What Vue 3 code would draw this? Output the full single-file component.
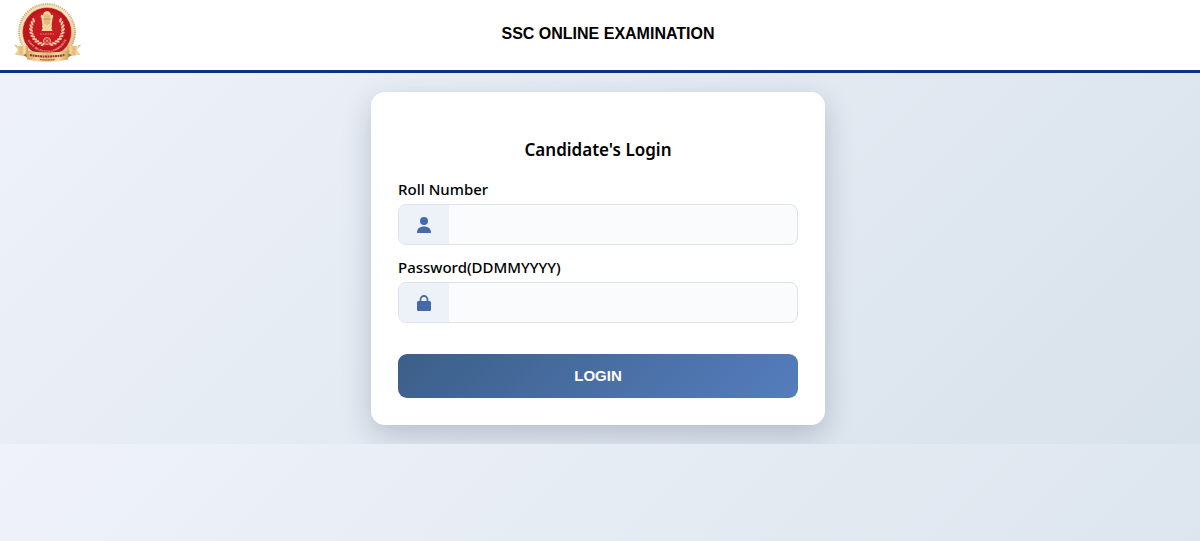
<script setup>
import { ref } from 'vue'

const rollNumber = ref('')
const password = ref('')

// Leaf positions along the two laurel branches of the emblem
const leaves = Array.from({ length: 10 }, (_, i) => {
  const angle = 105 + i * 12
  const a = (angle * Math.PI) / 180
  return { x: 33 + 16 * Math.cos(a), y: 28 + 16 * Math.sin(a), r: angle }
})
</script>

<template>
  <header class="topbar">
    <svg class="emblem" viewBox="0 0 68 62" role="img" aria-label="Staff Selection Commission">
      <defs>
        <linearGradient id="gold" x1="0" x2="1" y1="0" y2="1">
          <stop offset="0" stop-color="#e9d6a4" />
          <stop offset="0.5" stop-color="#f7eed2" />
          <stop offset="1" stop-color="#d6b070" />
        </linearGradient>
        <linearGradient id="ribbon" x1="0" x2="1">
          <stop offset="0" stop-color="#d3a45f" />
          <stop offset="0.25" stop-color="#f0d69a" />
          <stop offset="0.5" stop-color="#e2b878" />
          <stop offset="0.75" stop-color="#f3dca6" />
          <stop offset="1" stop-color="#cf9c56" />
        </linearGradient>
        <path id="ring" d="M11.500 30a21.500 21.500 0 0 0 43 0" />
      </defs>
      <circle cx="33" cy="31" r="28.500" fill="url(#gold)" />
      <circle cx="33" cy="31" r="28" fill="none" stroke="#c8ad72" stroke-width="2" stroke-dasharray="1 1.200" />
      <circle cx="33" cy="31" r="24.500" fill="#bd151c" stroke="#e8c58a" stroke-width="0.500" />
      <circle cx="33" cy="28" r="18.500" fill="#c61c22" />
      <g fill="#f0c9a6">
        <ellipse
          v-for="(l, i) in leaves"
          :key="'l' + i"
          :cx="l.x"
          :cy="l.y"
          rx="2.500"
          ry="1.100"
          :transform="`rotate(${l.r + 45} ${l.x} ${l.y})`"
        />
        <ellipse
          v-for="(l, i) in leaves"
          :key="'r' + i"
          :cx="66 - l.x"
          :cy="l.y"
          rx="2.500"
          ry="1.100"
          :transform="`rotate(${-l.r - 45} ${66 - l.x} ${l.y})`"
        />
      </g>
      <g fill="#f1d59b">
        <path d="M29 14Q29.500 10.500 33 10Q36.500 10.500 37 14L39 13.700Q40 15.500 38.500 17.500L37.500 25H28.500L27.500 17.500Q26 15.500 27 13.700Z" />
        <rect x="28" y="24.500" width="10" height="2" />
        <path d="M29 26H37L38.500 30H27.500Z" />
      </g>
      <path d="M31 14v9M33 13v11M35 14v9M29 18h8" stroke="#ba6d3c" stroke-width="0.500" />
      <path d="M26 33h14" stroke="#e87563" stroke-width="1.200" stroke-dasharray="2 0.500" />
      <circle cx="33" cy="40" r="3.500" fill="none" stroke="#efb295" stroke-width="1" />
      <path d="M29.500 40h7M33 36.500v7M30.500 37.500l5 5M35.500 37.500l-5 5" stroke="#efb295" stroke-width="0.500" />
      <text class="ring-text"><textPath href="#ring" startOffset="50%">STAFF SELECTION COMMISSION</textPath></text>
      <path d="M0 43.500Q7 46 14 44.500V54Q7 55.500 1 53.500L4 49Z" fill="url(#ribbon)" />
      <path d="M67 43.500Q60 46 53 44.500V54Q60 55.500 66 53.500L63 49Z" fill="url(#ribbon)" />
      <path d="M9 54L14 57V52Z M58 54L53 57V52Z" fill="#a56f38" />
      <path d="M12 49Q33 54 55 49L54 58.500Q33 63 13 58.500Z" fill="url(#ribbon)" />
      <path d="M16 54Q33 57 51 54" fill="none" stroke="#9c3d2b" stroke-width="2" stroke-dasharray="2.500 0.500 1.500 0.500" />
      <path d="M26 58.500Q33 59.500 41 58.500" fill="none" stroke="#a85a3a" stroke-width="1.200" stroke-dasharray="1.200 0.400" />
    </svg>
    <h1 class="title">SSC ONLINE EXAMINATION</h1>
  </header>

  <main class="content">
    <form class="card" @submit.prevent>
      <h2 class="heading">Candidate's Login</h2>

      <label class="label" for="roll">Roll Number</label>
      <div class="field">
        <span class="addon">
          <svg viewBox="0 0 16 16" aria-hidden="true">
            <circle cx="8" cy="4" r="4" />
            <path d="M1 15.500C1 11.500 4 9.500 8 9.500S15 11.500 15 15.500Q15 16 14.500 16H1.500Q1 16 1 15.500Z" />
          </svg>
        </span>
        <input id="roll" v-model="rollNumber" class="input" type="text" autocomplete="off" />
      </div>

      <label class="label" for="password">Password(DDMMYYYY)</label>
      <div class="field">
        <span class="addon">
          <svg viewBox="0 0 16 16" aria-hidden="true">
            <path d="M4.500 8V4.500a3.500 3.500 0 0 1 7 0V8" fill="none" stroke="currentColor" stroke-width="1.800" />
            <rect x="1" y="6" width="14" height="10" rx="1.500" />
          </svg>
        </span>
        <input id="password" v-model="password" class="input" type="password" autocomplete="off" />
      </div>

      <button class="login" type="submit">LOGIN</button>
    </form>
  </main>
</template>

<style>
body {
  margin: 0;
  background: linear-gradient(135deg, #eff2fa, #d8e2eb);
}
</style>

<style scoped>
.topbar {
  display: grid;
  grid-template-columns: 84px 1fr 68px;
  align-items: center;
  height: 70px;
  background: #fff;
  border-bottom: 3px solid #0b3578;
}

.emblem {
  width: 68px;
  height: 62px;
  margin: 0 0 6px 14px;
}

.title {
  margin: 0 0 2px;
  font: bold 16px/20px "Liberation Sans", Arial, sans-serif;
  text-align: center;
  color: #000;
}

.ring-text {
  font: bold 3px "Liberation Sans", Arial, sans-serif;
  fill: #f0b8a4;
  text-anchor: middle;
}

.content {
  padding: 19px 24px 19px 20px;
}

.card {
  box-sizing: border-box;
  max-width: 454px;
  margin: 0 auto;
  padding: 45px 27px 27px;
  background: #fff;
  border-radius: 14px;
  box-shadow: 0 10px 30px rgba(0, 20, 50, 0.2);
  font-family: "Segoe UI", "Noto Sans", "Open Sans", sans-serif;
  color: #000;
}

.heading {
  margin: 0 0 15px;
  font-size: 17px;
  font-weight: 600;
  line-height: 26px;
  text-align: center;
}

.label {
  display: block;
  margin-bottom: 4px;
  font-size: 15px;
  font-weight: 500;
  line-height: 22px;
}

.field {
  display: flex;
  box-sizing: border-box;
  height: 41px;
  margin-bottom: 11px;
  overflow: hidden;
  border: 1px solid #dfe2e6;
  border-radius: 8px;
  background: #fafbfd;
}

.field:focus-within {
  border-color: #4a6fa5;
}

.addon {
  display: flex;
  flex: 0 0 50px;
  align-items: center;
  justify-content: center;
  background: #edf2f9;
  color: #446ba8;
}

.addon svg {
  width: 16px;
  height: 16px;
  fill: currentColor;
}

.input {
  flex: 1;
  min-width: 0;
  padding: 0 12px;
  border: 0;
  outline: 0;
  background: transparent;
  font: inherit;
}

.login {
  display: block;
  width: 100%;
  height: 44px;
  margin-top: 31px;
  padding: 0;
  border: 0;
  border-radius: 9px;
  background: linear-gradient(135deg, #3c5f88, #557dbd);
  color: #fff;
  font: bold 15px/20px "Liberation Sans", Arial, sans-serif;
  cursor: pointer;
}
</style>
